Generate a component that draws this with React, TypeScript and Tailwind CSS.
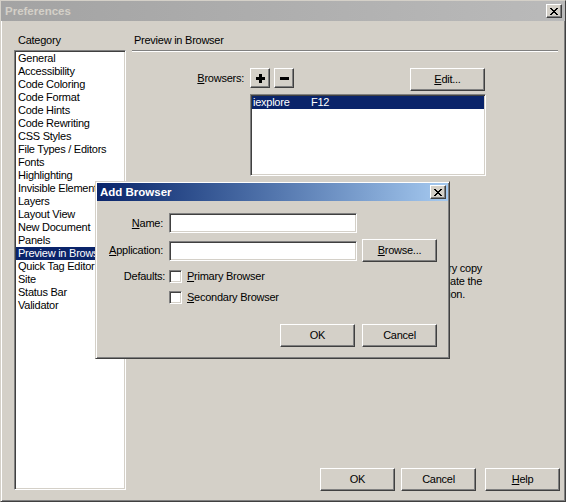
import React from 'react';

const raised =
  'border border-t-white border-l-white border-r-[#404040] border-b-[#404040] shadow-[inset_-1px_-1px_0_#808080,inset_1px_1px_0_#d4d0c8] bg-[#d4d0c8]';
const sunken =
  'border border-t-[#808080] border-l-[#808080] border-r-white border-b-white shadow-[inset_1px_1px_0_#404040,inset_-1px_-1px_0_#d4d0c8]';

const categories = [
  'General',
  'Accessibility',
  'Code Coloring',
  'Code Format',
  'Code Hints',
  'Code Rewriting',
  'CSS Styles',
  'File Types / Editors',
  'Fonts',
  'Highlighting',
  'Invisible Elements',
  'Layers',
  'Layout View',
  'New Document',
  'Panels',
  'Preview in Browser',
  'Quick Tag Editor',
  'Site',
  'Status Bar',
  'Validator',
];

// the classic 8x7 pixel "X" of the window close box
const CloseGlyph = () => (
  <svg width="8" height="7" viewBox="0 0 8 7" shapeRendering="crispEdges">
    {[0, 1, 2, 3, 4, 5, 6].map((i) => (
      <g key={i} fill="#000">
        <rect x={i} y={i} width="2" height="1" />
        <rect x={6 - i} y={i} width="2" height="1" />
      </g>
    ))}
  </svg>
);

const CloseBox = () => (
  <div className={`${raised} w-[16px] h-[14px] flex items-center justify-center`}>
    <CloseGlyph />
  </div>
);

const Button = ({ children, className = '' }: { children: React.ReactNode; className?: string }) => (
  <div className={`${raised} w-[75px] h-[23px] flex items-center justify-center ${className}`}>
    <span>{children}</span>
  </div>
);

const Checkbox = () => <div className={`${sunken} w-[13px] h-[13px] bg-white`} />;

const AddBrowserDialog = () => (
  <div className="absolute left-[94px] top-[180px] w-[355px] h-[178px] p-[1px] bg-[#d4d0c8] border border-t-[#d4d0c8] border-l-[#d4d0c8] border-r-[#404040] border-b-[#404040] shadow-[inset_1px_1px_0_#fff,inset_-1px_-1px_0_#808080] flex flex-col">
    <div className="h-[18px] flex items-center justify-between pl-[3px] pr-[2px] bg-gradient-to-r from-[#0a246a] to-[#a6caf0]">
      <span className="text-white font-bold text-[11.5px] tracking-normal">Add Browser</span>
      <CloseBox />
    </div>

    <div className="flex flex-col mt-[12px]">
      <div className="flex items-center h-[20px]">
        <div className="w-[66px] text-right">
          <u>N</u>ame:
        </div>
        <div className={`${sunken} ml-[6px] w-[188px] h-[20px] bg-white`} />
      </div>

      <div className="flex items-center h-[23px] mt-[6px]">
        <div className="w-[66px] text-right">
          <u>A</u>pplication:
        </div>
        <div className={`${sunken} ml-[6px] w-[188px] h-[20px] bg-white`} />
        <Button className="ml-[5px]">
          <u>B</u>rowse...
        </Button>
      </div>

      <div className="flex items-center h-[13px] mt-[8px]">
        <div className="w-[68px] text-right">Defaults:</div>
        <div className="ml-[4px]">
          <Checkbox />
        </div>
        <span className="ml-[5px]">
          <u>P</u>rimary Browser
        </span>
      </div>

      <div className="flex items-center h-[13px] mt-[8px]">
        <div className="ml-[72px]">
          <Checkbox />
        </div>
        <span className="ml-[5px]">
          <u>S</u>econdary Browser
        </span>
      </div>

      <div className="flex h-[23px] mt-[20px] pl-[183px] gap-[7px]">
        <Button>OK</Button>
        <Button>Cancel</Button>
      </div>
    </div>
  </div>
);

export default function App() {
  return (
    <div className="w-[566px] h-[502px] relative bg-[#d4d0c8] text-black text-[11px] leading-[13px] tracking-[-0.25px] font-['Liberation_Sans',Arial,sans-serif] border border-t-[#d4d0c8] border-l-[#d4d0c8] border-r-[#404040] border-b-[#404040] shadow-[inset_1px_1px_0_#fff,inset_-1px_-1px_0_#808080] flex flex-col overflow-hidden">
      {/* inactive title bar */}
      <div className="h-[20px] flex items-center justify-between pl-[4px] pr-[3px] bg-gradient-to-r from-[#a3a3a3] to-[#bababa]">
        <span className="text-[#d4d0c8] font-bold text-[11.5px] tracking-normal">Preferences</span>
        <CloseBox />
      </div>

      <div className="flex flex-1 pl-[13px] pt-[13px]">
        {/* category column */}
        <div className="w-[112px] flex flex-col pb-[11px]">
          <div className="h-[16px] pl-[4px]">Category</div>
          <div className={`${sunken} flex-1 bg-white p-[1px]`}>
            <div className="flex flex-col">
              {categories.map((c) => (
                <div
                  key={c}
                  className={`h-[13px] pl-[2px] whitespace-nowrap overflow-hidden ${
                    c === 'Preview in Browser' ? 'bg-[#0a246a] text-white' : ''
                  }`}
                >
                  {c}
                </div>
              ))}
            </div>
          </div>
        </div>

        {/* settings pane */}
        <div className="ml-[6px] w-[429px] flex flex-col pb-[10px]">
          <div className="h-[13px] pl-[2px]">Preview in Browser</div>
          <div className="mt-[3px] w-[426px] h-[2px] border-t border-t-[#808080] border-b border-b-white" />

          <div className="mt-[16px] w-[353px] h-[23px] flex items-start">
            <div className="w-[112px] text-right mt-[4px]">
              <u>B</u>rowsers:
            </div>
            <div className={`${raised} ml-[6px] w-[20px] h-[20px] flex items-center justify-center`}>
              <svg width="9" height="9" viewBox="0 0 9 9" shapeRendering="crispEdges">
                <rect x="0" y="3" width="9" height="3" fill="#000" />
                <rect x="3" y="0" width="3" height="9" fill="#000" />
              </svg>
            </div>
            <div className={`${raised} ml-[4px] w-[20px] h-[20px] flex items-center justify-center`}>
              <svg width="9" height="3" viewBox="0 0 9 3" shapeRendering="crispEdges">
                <rect x="0" y="0" width="9" height="3" fill="#000" />
              </svg>
            </div>
            <Button className="ml-auto">
              <u>E</u>dit...
            </Button>
          </div>

          <div className={`${sunken} mt-[3px] ml-[118px] w-[236px] h-[82px] bg-white p-[1px]`}>
            <div className="h-[13px] bg-[#0a246a] text-white pl-[1px] flex whitespace-nowrap">
              <span className="w-[58px]">iexplore</span>
              <span>F12</span>
            </div>
          </div>

          <div className="mt-[86px] w-[350px] text-right whitespace-nowrap">
            <div>Note: preview will make a temporary copy</div>
            <div>of the document; deselect to update the</div>
            <div className="pr-[17px]">document in its original location.</div>
          </div>

          <div className="mt-auto flex justify-end pr-[1px]">
            <Button>OK</Button>
            <Button className="ml-[6px]">Cancel</Button>
            <Button className="ml-[9px]">
              <u>H</u>elp
            </Button>
          </div>
        </div>
      </div>

      <AddBrowserDialog />
    </div>
  );
}
